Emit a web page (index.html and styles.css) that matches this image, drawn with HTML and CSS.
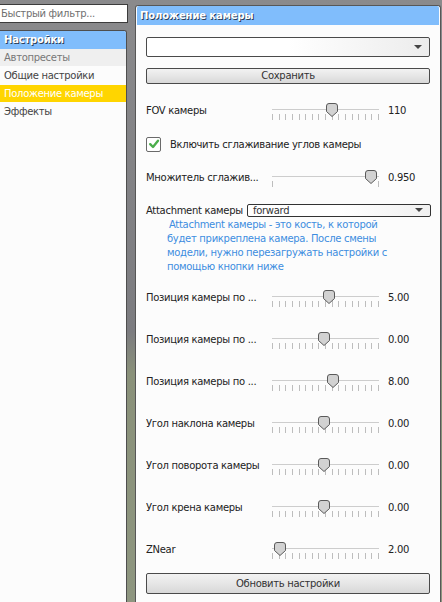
FILE: index.html
```html
<!DOCTYPE html>
<html lang="ru">
<head>
<meta charset="utf-8">
<title>Положение камеры</title>
<link rel="stylesheet" href="styles.css">
</head>
<body>
<div class="app">
  <aside class="sidebar">
    <div class="filter">Быстрый фильтр...</div>
    <div class="tree">
      <div class="tree-head">Настройки</div>
      <div class="tree-item muted">Автопресеты</div>
      <div class="tree-item">Общие настройки</div>
      <div class="tree-item active">Положение камеры</div>
      <div class="tree-item">Эффекты</div>
    </div>
  </aside>

  <section class="panel">
    <div class="panel-head">Положение камеры</div>
    <div class="panel-body">
      <div class="combo"><span class="arrow"></span></div>
      <div class="button save">Сохранить</div>

      <div class="row fov">
        <span class="label">FOV камеры</span>
        <div class="slider">
          <div class="track"></div>
          <div class="ticks"><i></i><i></i><i></i><i></i><i></i><i></i><i></i><i></i><i></i><i></i><i></i><i></i><i></i><i></i><i></i><i></i><i></i></div>
          <svg class="thumb" style="left:54px" width="12" height="14" viewBox="0 0 12 14"><path d="M0.5 3 Q0.5 0.5 3 0.5 H9 Q11.5 0.5 11.5 3 V8.5 L6 13.5 L0.5 8.5 Z" fill="#d2d2d2" stroke="#5a5a5a"/></svg>
        </div>
        <span class="value">110</span>
      </div>

      <div class="row check-row">
        <span class="checkbox"><svg width="12" height="12" viewBox="0 0 12 12"><path d="M2.2 6.2 L5 9 L10 2.8" fill="none" stroke="#4cae4c" stroke-width="2.4" stroke-linecap="round" stroke-linejoin="round"/></svg></span>
        <span class="check-label">Включить сглаживание углов камеры</span>
      </div>

      <div class="row mult">
        <span class="label">Множитель сглажив...</span>
        <div class="slider">
          <div class="track"></div>
          <div class="ticks"><i></i><i></i></div>
          <svg class="thumb" style="left:93px" width="12" height="14" viewBox="0 0 12 14"><path d="M0.5 3 Q0.5 0.5 3 0.5 H9 Q11.5 0.5 11.5 3 V8.5 L6 13.5 L0.5 8.5 Z" fill="#d2d2d2" stroke="#5a5a5a"/></svg>
        </div>
        <span class="value">0.950</span>
      </div>

      <div class="row attach">
        <span class="attach-label">Attachment камеры</span>
        <div class="combo small"><span class="combo-text">forward</span><span class="arrow"></span></div>
      </div>
      <p class="help">Attachment камеры - это кость, к которой будет прикреплена камера. После смены модели, нужно перезагружать настройки с помощью кнопки ниже</p>

      <div class="sliders">
        <div class="row">
          <span class="label">Позиция камеры по ...</span>
          <div class="slider">
            <div class="track"></div>
            <div class="ticks"><i></i><i></i><i></i><i></i><i></i><i></i><i></i><i></i><i></i><i></i><i></i><i></i><i></i><i></i><i></i><i></i><i></i></div>
            <svg class="thumb" style="left:51px" width="12" height="14" viewBox="0 0 12 14"><path d="M0.5 3 Q0.5 0.5 3 0.5 H9 Q11.5 0.5 11.5 3 V8.5 L6 13.5 L0.5 8.5 Z" fill="#d2d2d2" stroke="#5a5a5a"/></svg>
          </div>
          <span class="value">5.00</span>
        </div>
        <div class="row">
          <span class="label">Позиция камеры по ...</span>
          <div class="slider">
            <div class="track"></div>
            <div class="ticks"><i></i><i></i><i></i><i></i><i></i><i></i><i></i><i></i><i></i><i></i><i></i><i></i><i></i><i></i><i></i><i></i><i></i></div>
            <svg class="thumb" style="left:46px" width="12" height="14" viewBox="0 0 12 14"><path d="M0.5 3 Q0.5 0.5 3 0.5 H9 Q11.5 0.5 11.5 3 V8.5 L6 13.5 L0.5 8.5 Z" fill="#d2d2d2" stroke="#5a5a5a"/></svg>
          </div>
          <span class="value">0.00</span>
        </div>
        <div class="row">
          <span class="label">Позиция камеры по ...</span>
          <div class="slider">
            <div class="track"></div>
            <div class="ticks"><i></i><i></i><i></i><i></i><i></i><i></i><i></i><i></i><i></i><i></i><i></i><i></i><i></i><i></i><i></i><i></i><i></i></div>
            <svg class="thumb" style="left:55px" width="12" height="14" viewBox="0 0 12 14"><path d="M0.5 3 Q0.5 0.5 3 0.5 H9 Q11.5 0.5 11.5 3 V8.5 L6 13.5 L0.5 8.5 Z" fill="#d2d2d2" stroke="#5a5a5a"/></svg>
          </div>
          <span class="value">8.00</span>
        </div>
        <div class="row">
          <span class="label">Угол наклона камеры</span>
          <div class="slider">
            <div class="track"></div>
            <div class="ticks"><i></i><i></i><i></i><i></i><i></i><i></i><i></i><i></i><i></i><i></i><i></i><i></i><i></i><i></i><i></i><i></i><i></i></div>
            <svg class="thumb" style="left:46px" width="12" height="14" viewBox="0 0 12 14"><path d="M0.5 3 Q0.5 0.5 3 0.5 H9 Q11.5 0.5 11.5 3 V8.5 L6 13.5 L0.5 8.5 Z" fill="#d2d2d2" stroke="#5a5a5a"/></svg>
          </div>
          <span class="value">0.00</span>
        </div>
        <div class="row">
          <span class="label">Угол поворота камеры</span>
          <div class="slider">
            <div class="track"></div>
            <div class="ticks"><i></i><i></i><i></i><i></i><i></i><i></i><i></i><i></i><i></i><i></i><i></i><i></i><i></i><i></i><i></i><i></i><i></i></div>
            <svg class="thumb" style="left:46px" width="12" height="14" viewBox="0 0 12 14"><path d="M0.5 3 Q0.5 0.5 3 0.5 H9 Q11.5 0.5 11.5 3 V8.5 L6 13.5 L0.5 8.5 Z" fill="#d2d2d2" stroke="#5a5a5a"/></svg>
          </div>
          <span class="value">0.00</span>
        </div>
        <div class="row">
          <span class="label">Угол крена камеры</span>
          <div class="slider">
            <div class="track"></div>
            <div class="ticks"><i></i><i></i><i></i><i></i><i></i><i></i><i></i><i></i><i></i><i></i><i></i><i></i><i></i><i></i><i></i><i></i><i></i></div>
            <svg class="thumb" style="left:46px" width="12" height="14" viewBox="0 0 12 14"><path d="M0.5 3 Q0.5 0.5 3 0.5 H9 Q11.5 0.5 11.5 3 V8.5 L6 13.5 L0.5 8.5 Z" fill="#d2d2d2" stroke="#5a5a5a"/></svg>
          </div>
          <span class="value">0.00</span>
        </div>
        <div class="row">
          <span class="label">ZNear</span>
          <div class="slider">
            <div class="track"></div>
            <div class="ticks"><i></i><i></i><i></i><i></i><i></i><i></i><i></i><i></i><i></i><i></i><i></i><i></i><i></i><i></i><i></i><i></i><i></i></div>
            <svg class="thumb" style="left:2px" width="12" height="14" viewBox="0 0 12 14"><path d="M0.5 3 Q0.5 0.5 3 0.5 H9 Q11.5 0.5 11.5 3 V8.5 L6 13.5 L0.5 8.5 Z" fill="#d2d2d2" stroke="#5a5a5a"/></svg>
          </div>
          <span class="value">2.00</span>
        </div>
      </div>

      <div class="button update">Обновить настройки</div>
    </div>
  </section>
</div>
</body>
</html>
```

FILE: styles.css
```css
* { box-sizing: border-box; }
html, body { margin: 0; padding: 0; }
body {
  width: 442px;
  height: 602px;
  overflow: hidden;
  font-family: "DejaVu Sans", Verdana, sans-serif;
  font-size: 10px;
  letter-spacing: -0.3px;
  color: #222;
  background: linear-gradient(to bottom, #8a8a8c 0%, #7c7c80 55%, #8a917a 62%, #8e9680 100%);
}
.app {
  display: flex;
  height: 602px;
}
.sidebar {
  width: 128px;
  display: flex;
  flex-direction: column;
}
.filter {
  margin-top: 4px;
  height: 19px;
  background: #fff;
  border: 1px solid #3c3c3c;
  border-left: none;
  color: #707070;
  padding-left: 1px;
  line-height: 17px;
  white-space: nowrap;
}
.tree {
  margin-top: 7px;
  margin-right: 1px;
  flex: 1;
  background: #fcfcfc;
  border: 1px solid #4e4e4e;
  border-left: none;
  border-bottom: none;
  border-radius: 0 3px 0 0;
}
.tree-head {
  height: 18px;
  background: #80bdfc;
  color: #fff;
  font-weight: bold;
  letter-spacing: -0.2px;
  padding-left: 4px;
  line-height: 18px;
  text-shadow: 1px 1px 0 #2d3f58;
  border-radius: 0 2px 0 0;
}
.tree-item {
  height: 17px;
  margin-bottom: 1px;
  line-height: 17px;
  padding-left: 4px;
  color: #444;
  white-space: nowrap;
}
.tree-item.muted {
  background: #efefef;
  color: #777;
}
.tree-item.active {
  background: #ffd500;
  color: #fff;
}

.panel {
  margin-left: 7px;
  margin-top: 5px;
  width: 306px;
  background: #fcfcfc;
  border: 1px solid #575757;
  border-bottom: none;
  border-radius: 3px 3px 0 0;
  padding: 0 1px;
  display: flex;
  flex-direction: column;
}
.panel-head {
  height: 19px;
  background: #80bdfc;
  color: #fff;
  font-weight: bold;
  letter-spacing: -0.1px;
  padding-left: 3px;
  line-height: 19px;
  text-shadow: 1px 1px 0 #2d3f58;
  border-radius: 2px 2px 0 0;
}
.panel-body {
  padding: 0 9px;
  display: flex;
  flex-direction: column;
}
.combo {
  position: relative;
  margin-top: 12px;
  height: 20px;
  border: 1px solid #4a4a4a;
  border-radius: 2px;
  background: linear-gradient(to right, #ffffff 50%, #ececec 100%);
}
.arrow {
  position: absolute;
  right: 7px;
  top: 50%;
  margin-top: -2px;
  width: 0;
  height: 0;
  border-left: 4px solid transparent;
  border-right: 4px solid transparent;
  border-top: 4px solid #444;
}
.button {
  height: 16px;
  border: 1px solid #4a4a4a;
  border-radius: 2px;
  background: linear-gradient(to bottom, #f2f2f2 0%, #e6e6e6 50%, #d8d8d8 100%);
  color: #333;
  text-align: center;
  line-height: 14px;
}
.save { margin-top: 11px; }
.update {
  margin-top: 14px;
  height: 21px;
  line-height: 19px;
}

.row {
  display: flex;
  align-items: center;
  height: 20px;
}
.fov { margin-top: 16px; }
.check-row { margin-top: 14px; }
.mult { margin-top: 13px; }
.attach { margin-top: 13px; }
.label {
  width: 126px;
  white-space: nowrap;
  overflow: hidden;
  flex: none;
}
.slider {
  position: relative;
  width: 107px;
  height: 20px;
  flex: none;
}
.track {
  position: absolute;
  left: 0;
  right: 0;
  top: 9px;
  height: 1px;
  background: #cdcdcd;
}
.ticks {
  position: absolute;
  left: 0;
  right: 0;
  top: 14px;
  height: 6px;
  display: flex;
  justify-content: space-between;
}
.ticks i {
  width: 1px;
  height: 6px;
  background: #bdbdbd;
}
.thumb {
  position: absolute;
  top: 3px;
}
.value {
  margin-left: 9px;
}
.checkbox {
  width: 15px;
  height: 15px;
  border: 1px solid #6a6a6a;
  border-radius: 2px;
  background: #fff;
  display: flex;
  align-items: center;
  justify-content: center;
  flex: none;
}
.check-label {
  margin-left: 9px;
  white-space: nowrap;
}
.attach-label {
  width: 101px;
  white-space: nowrap;
  flex: none;
}
.combo.small {
  margin-top: 0;
  flex: 1;
  height: 13px;
  border-color: #333;
  background: linear-gradient(to right, #ffffff 50%, #f0f0f0 100%);
  margin-right: -1px;
}
.combo-text {
  position: absolute;
  left: 5px;
  top: 0;
  line-height: 11px;
  color: #333;
}
.combo.small .arrow { right: 7px; }
.help {
  margin: -2px 0 0 21px;
  width: 222px;
  color: #3d8de0;
  line-height: 14px;
  text-indent: 2px;
}
.sliders {
  margin-top: 13px;
  display: flex;
  flex-direction: column;
  gap: 22px;
}
```
